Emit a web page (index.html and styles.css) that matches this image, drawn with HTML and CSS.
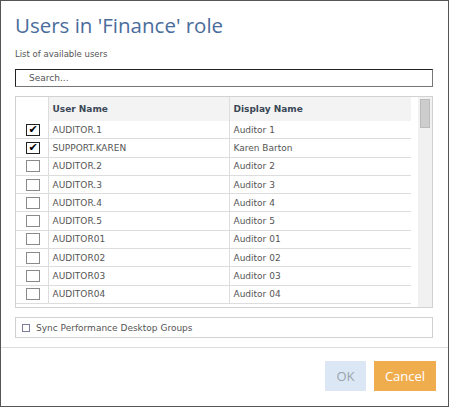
FILE: index.html
```html
<!DOCTYPE html>
<html lang="en">
<head>
    <meta charset="UTF-8">
    <title>Users in 'Finance' role</title>
    <link rel="stylesheet" href="styles.css">
</head>
<body>
<div class="dialog">
    <div class="dialog-body">
        <h1 class="title">Users in 'Finance' role</h1>
        <p class="subtitle">List of available users</p>

        <input class="search" type="text" placeholder="Search...">

        <div class="grid">
            <div class="grid-scroll">
                <table class="users">
                    <colgroup>
                        <col class="col-check">
                        <col class="col-user">
                        <col class="col-display">
                    </colgroup>
                    <thead>
                    <tr>
                        <th class="check-head"></th>
                        <th>User Name</th>
                        <th>Display Name</th>
                    </tr>
                    </thead>
                    <tbody>
                    <tr><td><span class="box checked">&#10004;</span></td><td>AUDITOR.1</td><td>Auditor 1</td></tr>
                    <tr><td><span class="box checked">&#10004;</span></td><td>SUPPORT.KAREN</td><td>Karen Barton</td></tr>
                    <tr><td><span class="box"></span></td><td>AUDITOR.2</td><td>Auditor 2</td></tr>
                    <tr><td><span class="box"></span></td><td>AUDITOR.3</td><td>Auditor 3</td></tr>
                    <tr><td><span class="box"></span></td><td>AUDITOR.4</td><td>Auditor 4</td></tr>
                    <tr><td><span class="box"></span></td><td>AUDITOR.5</td><td>Auditor 5</td></tr>
                    <tr><td><span class="box"></span></td><td>AUDITOR01</td><td>Auditor 01</td></tr>
                    <tr><td><span class="box"></span></td><td>AUDITOR02</td><td>Auditor 02</td></tr>
                    <tr><td><span class="box"></span></td><td>AUDITOR03</td><td>Auditor 03</td></tr>
                    <tr><td><span class="box"></span></td><td>AUDITOR04</td><td>Auditor 04</td></tr>
                    </tbody>
                </table>
            </div>
            <div class="scrollbar">
                <div class="thumb"></div>
            </div>
        </div>

        <label class="sync">
            <span class="sync-box"></span>
            Sync Performance Desktop Groups
        </label>
    </div>

    <div class="dialog-footer">
        <button class="btn btn-ok" disabled>OK</button>
        <button class="btn btn-cancel">Cancel</button>
    </div>
</div>
</body>
</html>
```

FILE: styles.css
```css
body {
    margin: 0;
    font-family: "DejaVu Sans", Verdana, sans-serif;
    background-color: #fff;
}

.dialog {
    width: 449px;
    height: 407px;
    box-sizing: border-box;
    border: 1px solid #555;
    display: flex;
    flex-direction: column;
    background-color: #fff;
}

.dialog-body {
    padding: 0 15px 0 14px;
}

.title {
    margin: 10px 0 0 0;
    font-family: "Open Sans", "Noto Sans", sans-serif;
    font-size: 20.5px;
    font-weight: normal;
    line-height: 28px;
    color: #4a6c9c;
}

.subtitle {
    margin: 9px 0 0 0;
    font-size: 8.5px;
    line-height: 12px;
    color: #555;
}

.search {
    display: block;
    width: 100%;
    height: 18px;
    margin-top: 9px;
    padding: 0 0 0 13px;
    box-sizing: border-box;
    border-style: solid;
    border-width: 1px;
    border-color: #222 #777 #777 #222;
    font-family: "DejaVu Sans", Verdana, sans-serif;
    font-size: 9px;
    color: #555;
    outline: none;
}

.search::placeholder {
    color: #555;
}

/* grid */
.grid {
    display: flex;
    margin-top: 9px;
    height: 212px;
    box-sizing: border-box;
    border: 1px solid #d2d2d2;
}

.grid-scroll {
    width: 395px;
    overflow: hidden;
}

.users {
    width: 395px;
    table-layout: fixed;
    border-collapse: collapse;
    font-size: 9px;
    color: #555;
}

.col-check {
    width: 32px;
}

.col-user {
    width: 181px;
}

.col-display {
    width: 182px;
}

.users th {
    height: 24px;
    padding: 0 0 0 4px;
    text-align: left;
    font-weight: bold;
    color: #3a4757;
    background-color: #f3f3f3;
    border-left: 1px solid #ddd;
}

.users th.check-head {
    background-color: #fff;
    border-left: none;
}

.users td {
    height: 17.3px;
    padding: 0 0 0 4px;
    border-bottom: 1px solid #ddd;
    border-left: 1px solid #ddd;
    white-space: nowrap;
}

.users td:first-child {
    border-left: none;
    padding-left: 10px;
}

.box {
    display: block;
    width: 12px;
    height: 10px;
    border: 1px solid #8a8a8a;
    font-size: 11px;
    line-height: 10px;
    text-align: center;
    color: #000;
}

.box.checked {
    border-color: #222;
}

.scrollbar {
    width: 14px;
    margin-left: 7px;
    background-color: #f1f1f1;
    position: relative;
}

.thumb {
    position: absolute;
    top: 2px;
    left: 2px;
    width: 8px;
    height: 27px;
    background-color: #cdcdcd;
    border: 1px solid #bbb;
}

/* sync option */
.sync {
    display: flex;
    align-items: center;
    gap: 6px;
    height: 21px;
    margin-top: 9px;
    padding-left: 6px;
    box-sizing: border-box;
    border: 1px solid #d2d2d2;
    font-size: 9px;
    color: #555;
}

.sync-box {
    width: 6px;
    height: 6px;
    border: 1px solid #7b7b9c;
}

/* footer */
.dialog-footer {
    margin-top: 9px;
    border-top: 1px solid #ddd;
    display: flex;
    justify-content: flex-end;
    gap: 8px;
    padding: 13px 12px 0 0;
}

.btn {
    height: 30px;
    border: none;
    font-family: "Open Sans", sans-serif;
    font-size: 13px;
    padding: 0;
}

.btn-ok {
    width: 41px;
    background-color: #dbe7f5;
    color: #9aa3ad;
}

.btn-cancel {
    width: 62px;
    background-color: #f0ad4e;
    color: #fff;
}
```
